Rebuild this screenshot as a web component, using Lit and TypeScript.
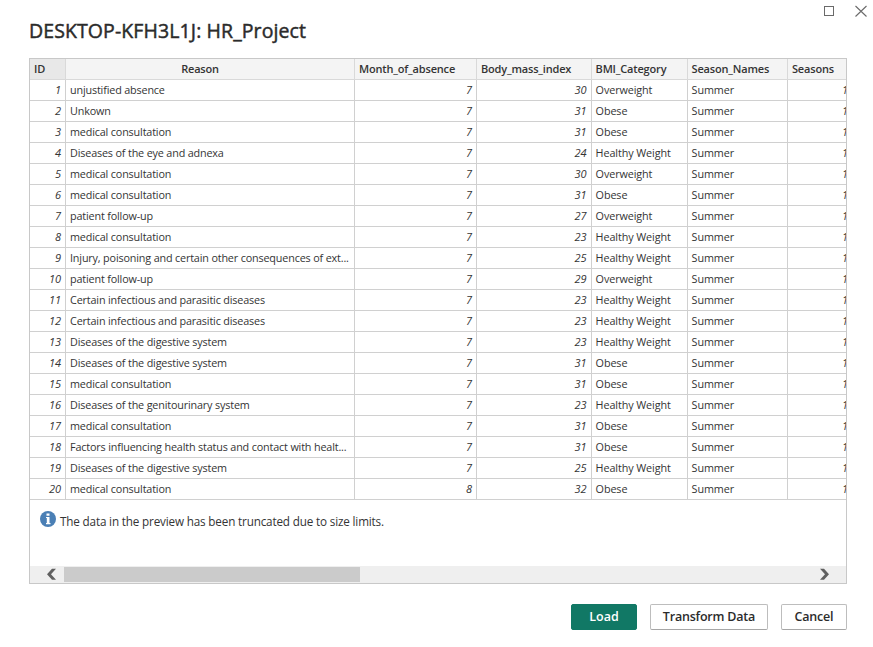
import { LitElement, html, css } from "lit";
import { customElement } from "lit/decorators.js";

type Row = [string, number, number, string];
const C = "medical consultation";
const D = "Diseases of the digestive system";
const H = "Healthy Weight";
const V = "Overweight";
const O = "Obese";
const I = "Certain infectious and parasitic diseases";

const rows: Row[] = [
  ["unjustified absence", 7, 30, V],
  ["Unkown", 7, 31, O],
  [C, 7, 31, O],
  ["Diseases of the eye and adnexa", 7, 24, H],
  [C, 7, 30, V],
  [C, 7, 31, O],
  ["patient follow-up", 7, 27, V],
  [C, 7, 23, H],
  ["Injury, poisoning and certain other consequences of ext...", 7, 25, H],
  ["patient follow-up", 7, 29, V],
  [I, 7, 23, H],
  [I, 7, 23, H],
  [D, 7, 23, H],
  [D, 7, 31, O],
  [C, 7, 31, O],
  ["Diseases of the genitourinary system", 7, 23, H],
  [C, 7, 31, O],
  ["Factors influencing health status and contact with healt...", 7, 31, O],
  [D, 7, 25, H],
  [C, 8, 32, O],
];

@customElement("preview-table")
export class PreviewTable extends LitElement {
  static styles = css`
    :host { display: block; overflow: hidden; }
    .row {
      display: grid;
      grid-template-columns: 36px 289px 122px 115px 96px 100px 65px;
      height: 21px;
      width: 823px;
    }
    .cell {
      box-sizing: border-box;
      border-right: 1px solid #d0d0d0;
      border-bottom: 1px solid #d0d0d0;
      padding: 0 4px;
      line-height: 19px;
      height: 21px;
      white-space: nowrap;
      font-size: 10.8px;
      letter-spacing: -0.16px;
    }
    .cell:nth-child(n + 5) { padding-left: 3.6px; letter-spacing: -0.1px; }
    .cell.num { text-align: right; font-style: italic; font-size: 11px; letter-spacing: 0; }
    .cell.num:nth-child(4) { padding-right: 4.5px; }
    .head .cell {
      background: #f4f4f4;
      font-weight: 600;
      font-size: 11px;
      border-color: #d9d9d9;
      letter-spacing: -0.18px;
    }
    .head .cell:last-child { padding-left: 4px; }
    .head .cell.id { background: #e8e8e8; }
    .head .cell.mid { text-align: center; padding-right: 24px; }
  `;
  render() {
    return html`
      <div class="row head">
        <div class="cell id">ID</div>
        <div class="cell mid">Reason</div>
        <div class="cell">Month_of_absence</div>
        <div class="cell">Body_mass_index</div>
        <div class="cell">BMI_Category</div>
        <div class="cell">Season_Names</div>
        <div class="cell">Seasons</div>
      </div>
      ${rows.map(
        ([reason, month, bmi, category], i) => html`<div class="row">
          <div class="cell num">${i + 1}</div>
          <div class="cell">${reason}</div>
          <div class="cell num">${month}</div>
          <div class="cell num">${bmi}</div>
          <div class="cell">${category}</div>
          <div class="cell">Summer</div>
          <div class="cell num">1</div>
        </div>`
      )}
    `;
  }
}

@customElement("app-root")
export class AppRoot extends LitElement {
  static styles = css`
    :host {
      display: flex;
      flex-direction: column;
      box-sizing: border-box;
      height: 647px;
      width: 873px;
      background: #fff;
      color: #343434;
      font-family: "Open Sans", "Noto Sans", sans-serif;
      overflow: hidden;
    }
    .controls {
      display: flex;
      justify-content: flex-end;
      gap: 20px;
      padding: 5px 5px 0 0;
      height: 12px;
    }
    .controls svg { display: block; }
    .title {
      margin: 0 0 0 29px;
      height: 41px;
      line-height: 27px;
      font-size: 19.5px;
      letter-spacing: 0.1px;
      font-weight: 400;
      -webkit-text-stroke: 0.45px #2b2b2b;
      color: #2b2b2b;
      white-space: nowrap;
    }
    .panel {
      box-sizing: border-box;
      width: 818px;
      height: 526px;
      margin-left: 29px;
      border: 1px solid #c8c8c8;
      display: flex;
      flex-direction: column;
    }
    .notice {
      display: flex;
      gap: 4px;
      padding: 11px 0 0 10px;
      font-size: 11.7px;
      line-height: 20px;
      letter-spacing: -0.16px;
      flex: 1;
      white-space: nowrap;
    }
    .bar {
      height: 17px;
      background: #efefef;
      display: flex;
      align-items: flex-start;
    }
    .thumb { width: 296px; height: 15px; background: #cbcbcb; margin: 1px 0 0 7px; }
    .left { margin: 2px 0 0 16px; }
    .right { margin: 2px 16px 0 auto; }
    .actions {
      display: flex;
      justify-content: flex-end;
      gap: 13px;
      margin: 20px 26px 0 0;
    }
    .btn {
      box-sizing: border-box;
      height: 26px;
      width: 66px;
      padding: 0;
      border: 1px solid #bdbdbd;
      border-bottom-color: #a6a6a6;
      border-radius: 2px;
      background: #fff;
      color: #2b2b2b;
      font: 600 12.5px/22px "Open Sans", "Noto Sans", sans-serif;
      letter-spacing: -0.2px;
      white-space: nowrap;
    }
    .wide { width: 118px; }
    .primary { background: #117865; border-color: #117865; color: #fff; letter-spacing: 0; }
  `;
  render() {
    return html`
      <div class="controls">
        <svg width="12" height="12" viewBox="0 0 12 12"><rect x="1.5" y="1.5" width="9" height="9" fill="none" stroke="#6a6a6a" /></svg>
        <svg width="13" height="13" viewBox="0 0 13 13"><path d="M.5 1L11.500 11.500M11.500 1L.5 11.500" stroke="#6a6a6a" stroke-width="1.1" /></svg>
      </div>
      <div class="title">DESKTOP-KFH3L1J: HR_Project</div>
      <div class="panel">
        <preview-table></preview-table>
        <div class="notice">
          <svg width="16" height="16" viewBox="0 0 16 16">
            <circle cx="8" cy="8" r="8" fill="#4a7fb5" />
            <path d="M6.500 2.500h3v2.200h-3zM6 6h3.500v6H10.500v1.200H6V12h.8V7H6z" fill="#fff" />
          </svg>
          <span>The data in the preview has been truncated due to size limits.</span>
        </div>
        <div class="bar">
          <svg class="left" width="11" height="12" viewBox="0 0 11 12"><path d="M6 .8h4L5 6.300l5 5.500H6L1 6.300z" fill="#606060" /></svg>
          <div class="thumb"></div>
          <svg class="right" width="11" height="12" viewBox="0 0 11 12"><path d="M5 .8H1L6 6.300l-5 5.500h4L10 6.300z" fill="#606060" /></svg>
        </div>
      </div>
      <div class="actions">
        <button class="btn primary">Load</button>
        <button class="btn wide">Transform Data</button>
        <button class="btn">Cancel</button>
      </div>
    `;
  }
}
